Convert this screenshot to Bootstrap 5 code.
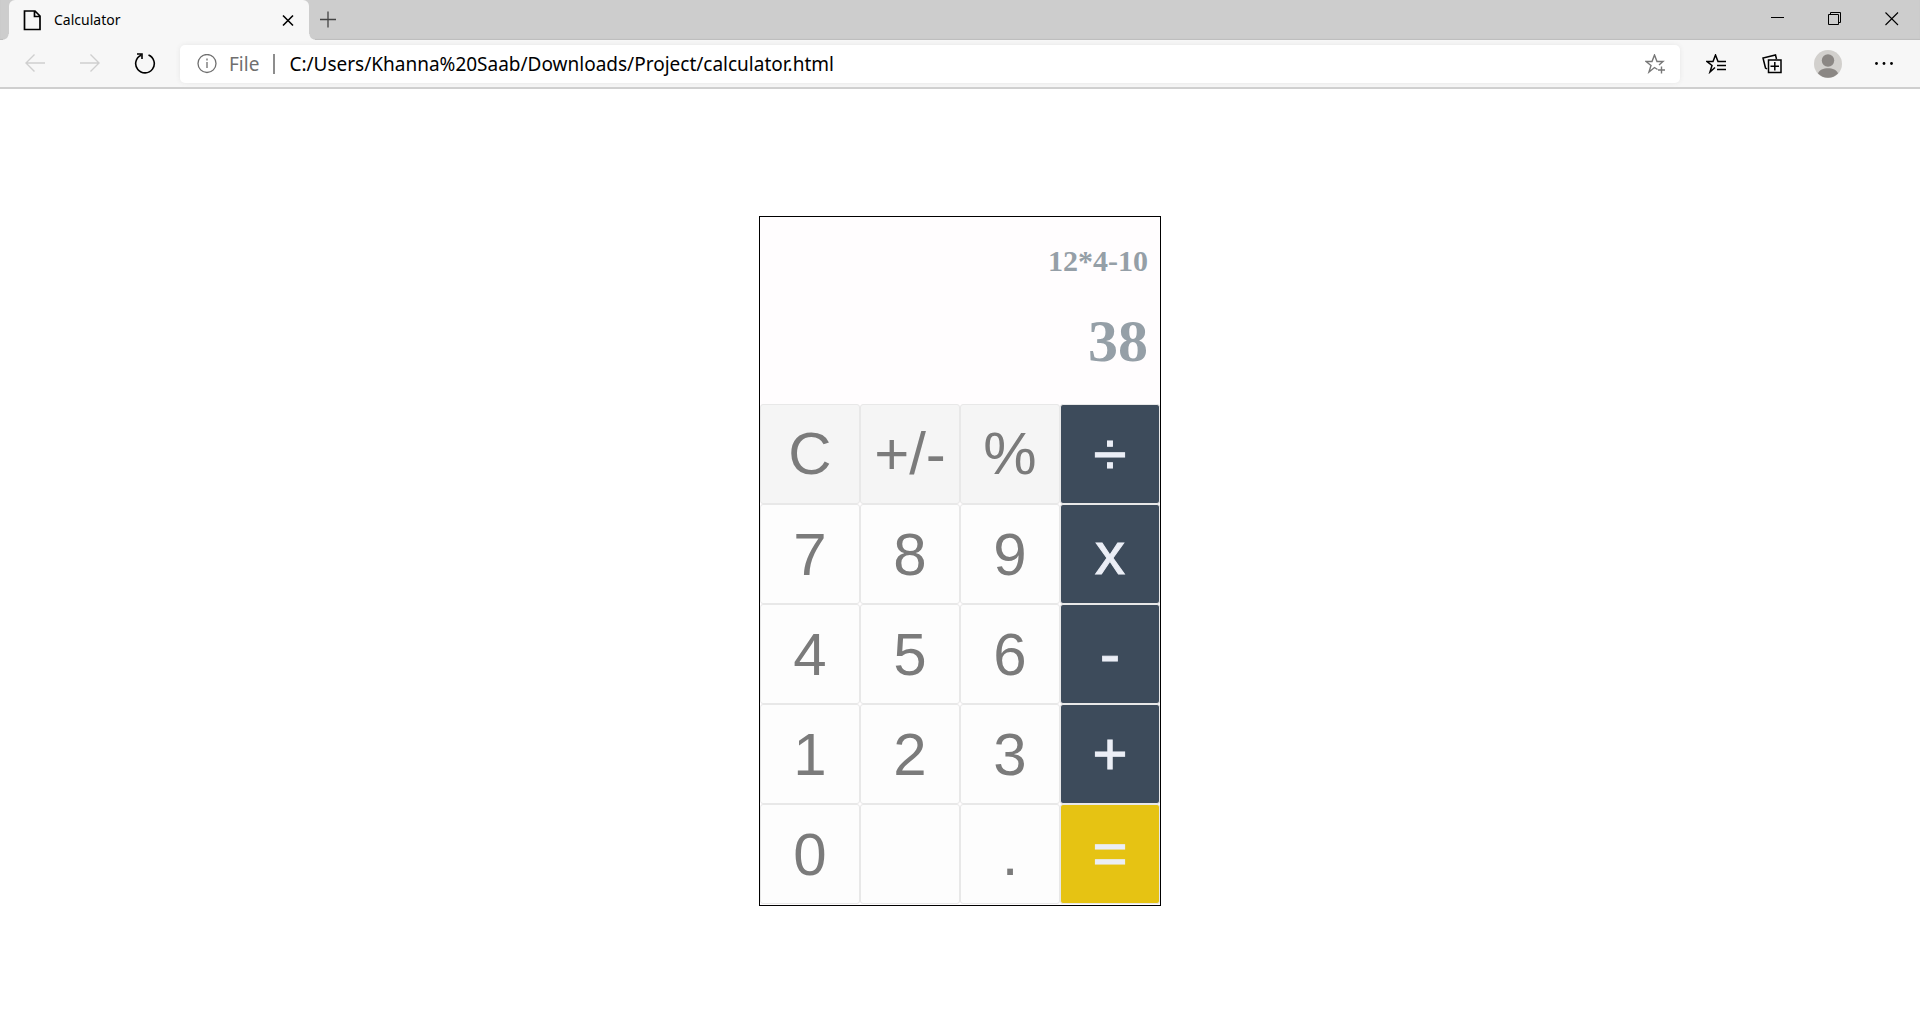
<!DOCTYPE html>
<html lang="en">
<head>
<meta charset="utf-8">
<meta name="viewport" content="width=device-width, initial-scale=1">
<title>Calculator</title>
<link href="https://cdn.jsdelivr.net/npm/bootstrap@5.3.0/dist/css/bootstrap.min.css" rel="stylesheet">
<style>
  body { font-family: "Noto Sans", "Open Sans", sans-serif; background: #fff; color: #000; }
  button { border: 0; background: transparent; padding: 0; color: #000; }
  svg { display: block; fill: none; stroke: currentColor; }
  svg.solid { fill: currentColor; stroke: none; }

  /* Tab strip */
  .tab-strip { height: 40px; background: #cdcdcd; padding-left: 9px; box-shadow: inset 0 -1px 1px #bdbdbd; }
  .page-tab { width: 300px; height: 40px; background: #f7f7f7; border-radius: 6px 6px 0 0; padding: 0 14px 0 13px; font-size: 14px; line-height: 20px; }
  .page-tab::before, .page-tab::after { content: ""; position: absolute; bottom: 0; width: 6px; height: 6px; }
  .page-tab::before { left: -6px; background: radial-gradient(circle at 0 0, transparent 5px, #f7f7f7 6px); }
  .page-tab::after { right: -6px; background: radial-gradient(circle at 100% 0, transparent 5px, #f7f7f7 6px); }
  .new-tab { width: 38px; height: 40px; color: #444; }
  .win-btn { width: 57px; height: 38px; }

  /* Toolbar */
  .tool-bar { background: #f7f7f7; padding: 5px 8px 4px 7px; border-bottom: 2px solid #cfcfcf; }
  .nav-btn { width: 55px; height: 38px; }
  .side-btn { width: 56px; height: 38px; }
  .faded { color: #cfcfcf; }
  .address { height: 38px; background: #fff; border-radius: 5px; margin: 0 8px; padding: 0 15px 0 17px; box-shadow: 0 0 5px #e6e6e6; font-size: 19px; line-height: 28px; color: #6f6f6f; }
  .address input { border: 0; outline: 0; padding: 0; background: transparent; color: #000; min-width: 0; }
  .address button { color: #777; }
  .divider { width: 2px; height: 20px; background: #8d8d8d; margin: 0 14px; }
  .silhouette { fill: #8b8784; }
  .disc { fill: #d2d0cd; }

  /* Calculator */
  .calculator { width: 402px; max-width: 100%; margin-top: 127px; border: 1px solid #000; background: #fffdfe; padding-bottom: 1px; }
  .screen { padding: 26px 12px 27px; color: #959fa7; font-family: "Liberation Serif", serif; font-weight: 700; gap: 26px; }
  .history { font-size: 30px; line-height: 36px; }
  .result { font-size: 60px; line-height: 72px; }
  .key { height: 100px; padding-top: 2px; border: 1px solid #e8e8e8; border-radius: 3px; background: #fdfdfd; color: #7b7b7b; font-family: "Liberation Sans", sans-serif; font-size: 60px; line-height: 70px; }
  .key-fn { background: #f5f5f5; padding-top: 0; }
  .key-op, .key-eq { color: #ebeef6; padding-top: 0; -webkit-text-stroke: 1px #ebeef6; }
  .key-op { background: #3d4b5b; }
  .key-eq { background: #e6c313; }
</style>
<script src="https://cdn.jsdelivr.net/npm/bootstrap@5.3.0/dist/js/bootstrap.bundle.min.js"></script>
</head>
<body>
<header>
  <div class="tab-strip d-flex">
    <div class="page-tab d-flex align-items-center position-relative">
      <svg width="20" height="22" viewBox="0 0 20 22" stroke-width="1.7"><path d="M2.500 2h10.500l5 5v13.500h-15.500zM12.500 2v5.500h5.500"/></svg>
      <span class="ms-2 ps-1 flex-grow-1">Calculator</span>
      <button type="button" aria-label="Close tab"><svg width="14" height="14" viewBox="0 0 14 14" stroke-width="1.6"><path d="M2 2.500l10 10M12 2.500l-10 10"/></svg></button>
    </div>
    <button class="new-tab d-flex align-items-center justify-content-center" type="button" aria-label="New tab"><svg width="18" height="18" viewBox="0 0 18 18" stroke-width="1.3"><path d="M1 8.500h16M9 .5v16"/></svg></button>
    <div class="d-flex ms-auto">
      <button class="win-btn d-flex align-items-center justify-content-center" type="button" aria-label="Minimize"><svg width="14" height="14" viewBox="0 0 14 14"><path d="M0 5.500h13"/></svg></button>
      <button class="win-btn d-flex align-items-center justify-content-center" type="button" aria-label="Restore"><svg width="14" height="14" viewBox="0 0 14 14"><path d="M.5 2.500h10v10h-10zM2.500 2V.5h10v10H11"/></svg></button>
      <button class="win-btn d-flex align-items-center justify-content-center" type="button" aria-label="Close"><svg width="14" height="14" viewBox="0 0 14 14" stroke-width="1.1"><path d="M.5 .5l12.500 12.500M13 .5L.5 13"/></svg></button>
    </div>
  </div>
  <div class="tool-bar d-flex align-items-center">
    <button class="nav-btn faded d-flex align-items-center justify-content-center" type="button" aria-label="Back"><svg width="20" height="20" viewBox="0 0 20 20" stroke-width="1.4"><path d="M20 9H1M9.500 .5L1 9l8.500 8.500"/></svg></button>
    <button class="nav-btn faded d-flex align-items-center justify-content-center" type="button" aria-label="Forward"><svg width="20" height="20" viewBox="0 0 20 20" stroke-width="1.4"><path d="M0 9h19M10.500 .5l8.500 8.500l-8.500 8.500"/></svg></button>
    <button class="nav-btn d-flex align-items-center justify-content-center" type="button" aria-label="Refresh"><svg width="22" height="22" viewBox="0 0 22 22" stroke-width="1.6"><path d="M14.500 2A9.300 9.300 0 1 1 7 2.200M3 1h5v5"/></svg></button>
    <div class="address d-flex align-items-center flex-grow-1">
      <svg width="20" height="20" viewBox="0 0 20 20" stroke-width="1.3"><circle cx="10" cy="9.500" r="9"/><path d="M10 8v6M10 4.500v2"/></svg>
      <label class="ms-2 ps-1" for="url">File</label>
      <span class="divider"></span>
      <input class="flex-grow-1" id="url" type="text" value="C:/Users/Khanna%20Saab/Downloads/Project/calculator.html">
      <button type="button" aria-label="Add to favorites"><svg width="20" height="20" viewBox="0 0 20 20" stroke-width="1.4"><path d="M12.500 15.500L9.500 13.500 4 18l2-6.500L1 7.500h6L9.500 1l2.500 6.500h6L14 11M16.500 12.500v7M13 16h7"/></svg></button>
    </div>
    <button class="side-btn d-flex align-items-center justify-content-center" type="button" aria-label="Favorites"><svg width="20" height="20" viewBox="0 0 20 20" stroke-width="1.5"><path d="M9 13.500L4 18l2-6.500L1 7.500h6L9.500 1l2.500 6.500h8M11 11.500h9M11 15.500h9"/></svg></button>
    <button class="side-btn d-flex align-items-center justify-content-center" type="button" aria-label="Collections"><svg width="20" height="20" viewBox="0 0 20 20" stroke-width="1.5"><path d="M6.500 6h12.500v12.500h-12.500zM12.800 8v8.500M8.500 12.300h8.500M5 15l-1.500-1L1 4l12.500-3l1 4"/></svg></button>
    <button class="side-btn d-flex align-items-center justify-content-center" type="button" aria-label="Profile"><svg class="solid" width="28" height="28" viewBox="0 0 28 28"><circle class="disc" cx="14" cy="14" r="14"/><circle class="silhouette" cx="14" cy="10.500" r="6.200"/><path class="silhouette" d="M4 23.500C6 16.500 22 16.500 24 23.500A14 14 0 0 1 4 23.500z"/></svg></button>
    <button class="side-btn d-flex align-items-center justify-content-center" type="button" aria-label="Settings and more"><svg class="solid" width="20" height="20" viewBox="0 0 20 20"><circle cx="2.500" cy="9.500" r="1.400"/><circle cx="10" cy="9.500" r="1.400"/><circle cx="17.500" cy="9.500" r="1.400"/></svg></button>
  </div>
</header>
<main class="d-flex justify-content-center">
  <section class="calculator" aria-label="Calculator">
    <div class="screen d-flex flex-column text-end">
      <div class="history">12*4-10</div>
      <output class="result">38</output>
    </div>
    <div class="row row-cols-4 g-0">
      <button type="button" class="key key-fn">C</button>
      <button type="button" class="key key-fn">+/-</button>
      <button type="button" class="key key-fn">%</button>
      <button type="button" class="key key-op">÷</button>
      <button type="button" class="key">7</button>
      <button type="button" class="key">8</button>
      <button type="button" class="key">9</button>
      <button type="button" class="key key-op">x</button>
      <button type="button" class="key">4</button>
      <button type="button" class="key">5</button>
      <button type="button" class="key">6</button>
      <button type="button" class="key key-op">-</button>
      <button type="button" class="key">1</button>
      <button type="button" class="key">2</button>
      <button type="button" class="key">3</button>
      <button type="button" class="key key-op">+</button>
      <button type="button" class="key">0</button>
      <button type="button" class="key" aria-label="Blank"></button>
      <button type="button" class="key">.</button>
      <button type="button" class="key key-eq">=</button>
    </div>
  </section>
</main>
</body>
</html>
